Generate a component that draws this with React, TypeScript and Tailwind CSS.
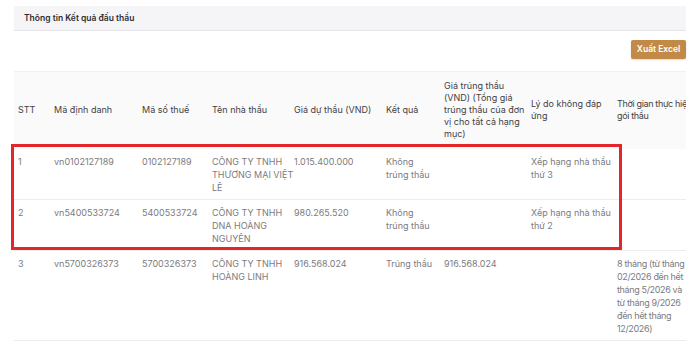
import React from "react";

const cols = [36, 88, 70, 82, 92, 58, 87, 87, 120];

const headers: React.ReactNode[] = [
  "STT",
  "Mã định danh",
  "Mã số thuế",
  "Tên nhà thầu",
  "Giá dự thầu (VND)",
  "Kết quả",
  <>
    Giá trúng thầu
    <br />
    (VND) (Tổng giá
    <br />
    trúng thầu của đơn
    <br />
    vị cho tất cả hạng
    <br />
    mục)
  </>,
  <>
    Lý do không đáp
    <br />
    ứng
  </>,
  <>
    Thời gian thực hiện
    <br />
    gói thầu
  </>,
];

const rows: React.ReactNode[][] = [
  [
    "1",
    "vn0102127189",
    "0102127189",
    <>
      CÔNG TY TNHH
      <br />
      THƯƠNG MẠI VIỆT
      <br />
      LÊ
    </>,
    "1.015.400.000",
    <>
      Không
      <br />
      trúng thầu
    </>,
    "",
    <>
      Xếp hạng nhà thầu
      <br />
      thứ 3
    </>,
    "",
  ],
  [
    "2",
    "vn5400533724",
    "5400533724",
    <>
      CÔNG TY TNHH
      <br />
      DNA HOÀNG
      <br />
      NGUYÊN
    </>,
    "980.265.520",
    <>
      Không
      <br />
      trúng thầu
    </>,
    "",
    <>
      Xếp hạng nhà thầu
      <br />
      thứ 2
    </>,
    "",
  ],
  [
    "3",
    "vn5700326373",
    "5700326373",
    <>
      CÔNG TY TNHH
      <br />
      HOÀNG LINH
    </>,
    "916.568.024",
    "Trúng thầu",
    "916.568.024",
    "",
    <>
      8 tháng (từ tháng
      <br />
      02/2026 đến hết
      <br />
      tháng 5/2026 và
      <br />
      từ tháng 9/2026
      <br />
      đến hết tháng
      <br />
      12/2026)
    </>,
  ],
];

export default function App() {
  return (
    <div
      className="w-[700px] h-[344px] overflow-hidden bg-white px-[14px] pt-[6px]"
      style={{ fontFamily: "Inter, 'Noto Sans', sans-serif" }}
    >
      <div className="h-[25px] flex items-center pl-[10px] bg-[#f5f5f8] border-b border-[#e4e4ea]">
        <span className="text-[8.5px] font-semibold text-[#2e2e33] leading-none">
          Thông tin Kết quả đấu thầu
        </span>
      </div>
      <div className="flex justify-end mt-[9px]">
        <button className="w-[55px] h-[19px] rounded-[2px] bg-[#c28a47] text-white text-[8.5px] font-semibold leading-none shadow-[0_1px_2px_rgba(0,0,0,0.15)]">
          Xuất Excel
        </button>
      </div>
      <div className="relative mt-[12px]">
        <div className="overflow-hidden">
          <table className="table-fixed border-collapse" style={{ width: 720 }}>
            <colgroup>
              {cols.map((w, i) => (
                <col key={i} style={{ width: w }} />
              ))}
            </colgroup>
            <thead>
              <tr className="h-[77px] bg-[#fafafb] border-t border-[#f0f0f3]">
                {headers.map((h, i) => (
                  <th
                    key={i}
                    className={
                      i === 8
                        ? "align-middle text-left font-normal text-[9px] leading-[12px] text-[#3f3f44] pl-[3px] pr-[2px] whitespace-nowrap tracking-[-0.35px]"
                        : "align-middle text-left font-normal text-[9px] leading-[12px] text-[#3f3f44] pl-[4px] pr-[2px] whitespace-nowrap"
                    }
                  >
                    {h}
                  </th>
                ))}
              </tr>
            </thead>
            <tbody>
              {rows.map((r, ri) => (
                <tr key={ri} className="border-b border-[#ececef]">
                  {r.map((c, ci) => (
                    <td
                      key={ci}
                      className={
                        ci === 8
                          ? "align-top text-left text-[9px] leading-[13px] text-[#7b7b80] pl-[3px] pr-[2px] pt-[6px] pb-[5px] whitespace-nowrap tracking-[-0.35px]"
                          : "align-top text-left text-[9px] leading-[13px] text-[#7b7b80] pl-[4px] pr-[2px] pt-[6px] pb-[5px] whitespace-nowrap"
                      }
                    >
                      {c}
                    </td>
                  ))}
                </tr>
              ))}
            </tbody>
          </table>
        </div>
        <div className="absolute left-[-3px] top-[73px] w-[611px] h-[106px] border-[3px] border-[#e3262a] pointer-events-none" />
      </div>
    </div>
  );
}
